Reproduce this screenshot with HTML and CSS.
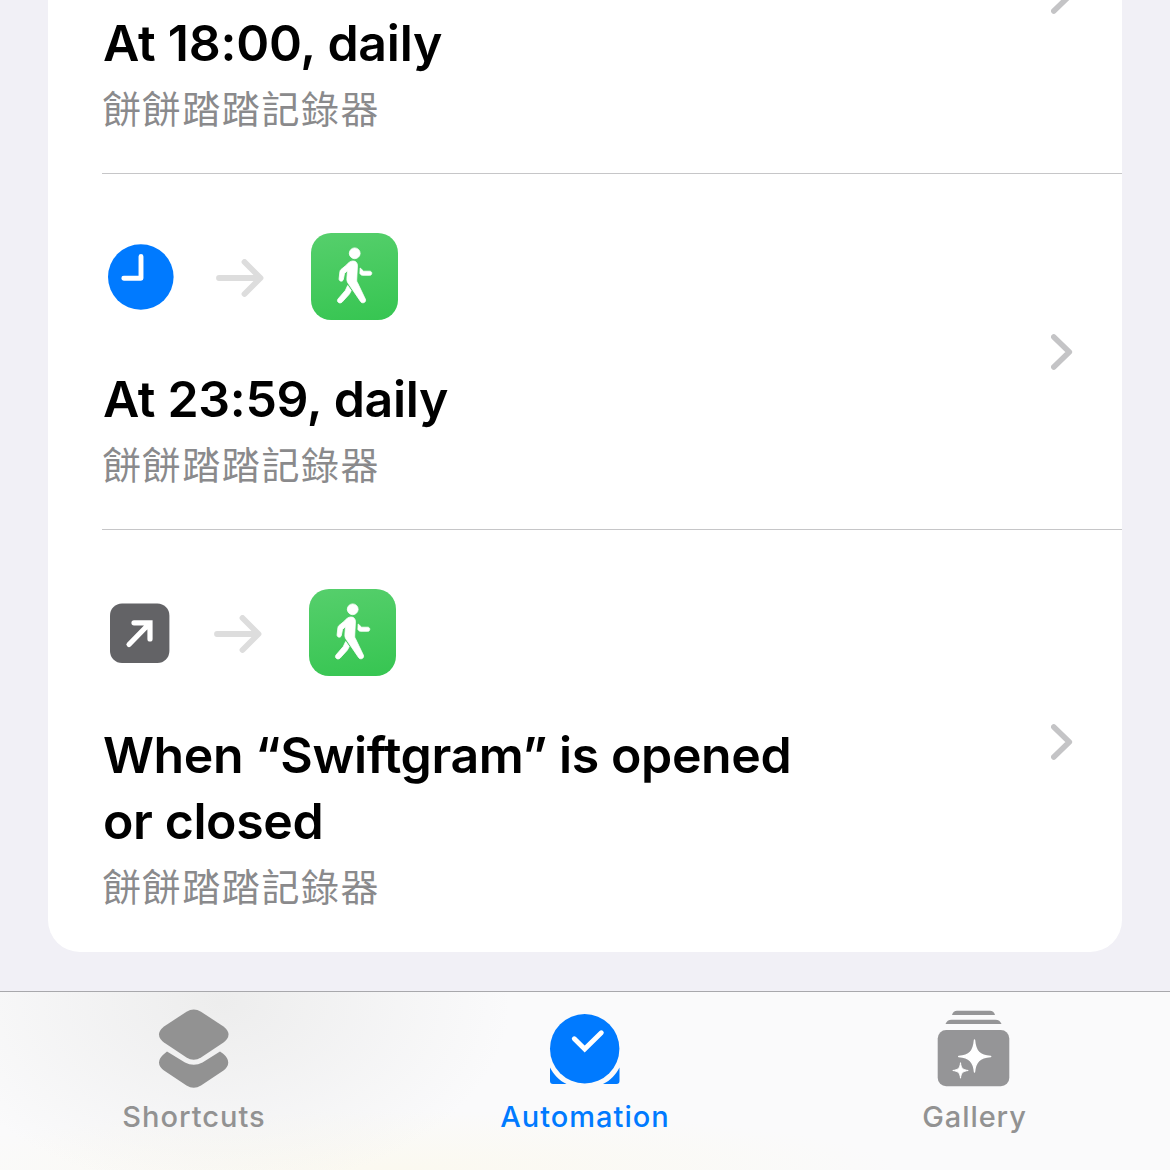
FILE: index.html
```html
<!DOCTYPE html>
<html lang="en">
<head>
<meta charset="utf-8">
<title>Automation</title>
<link rel="stylesheet" href="styles.css">
</head>
<body>
<svg class="defs" width="0" height="0" aria-hidden="true">
  <defs>
    <symbol id="chevron" viewBox="0 0 22 36"><path d="M2.800 3 18.300 18 2.800 33" fill="none" stroke="#c4c4c6" stroke-width="5.600" stroke-linecap="round" stroke-linejoin="round"/></symbol>
    <symbol id="arrow" viewBox="0 0 48 38"><path d="M3 19H44M28.5 3 44.5 19 28.5 35" fill="none" stroke="#dddddd" stroke-width="5.800" stroke-linecap="round" stroke-linejoin="round"/></symbol>
    <symbol id="walk" viewBox="0 0 87 87">
      <g fill="#fff" stroke="#fff" stroke-width=".8" stroke-linejoin="round">
      <circle cx="43.700" cy="20.300" r="5.400"/>
      <path d="M35.500 32C37.500 29.200 40 28 42 28C45 28 46.600 30 46.400 33L45.700 47C45.600 48 45.800 48.500 46.400 49.500L54.300 66C55.800 69.300 51.200 71.300 49.500 68.400L38 51.500C36.200 49 35.700 47.500 35.900 45.400L36.500 37.500L33.500 40.500L32.300 46.500C31.700 49.200 27.700 48.500 28.100 45.600L28.900 38.800C29 37.800 29.400 37.100 30 36.500Z"/>
      <path d="M36.700 52.500 40.200 57.600C39.700 59 39 60.200 38 61.500L31.200 69C28.800 71.500 25 68.700 27 66L34.300 57.500Z"/>
      <path d="M49.200 35 52.600 38.200H58.800C61.400 38.200 61.400 42.300 58.800 42.300H51.700C50.700 42.300 50.200 42 49.700 41.500L48.900 40.400Z"/>
      </g>
    </symbol>
  </defs>
</svg>
<main class="content">
  <section class="card">
    <article class="row">
      <div class="text">
        <h2 class="title early">At 18:00, daily</h2>
        <p class="subtitle">餅餅踏踏記錄器</p>
      </div>
      <svg class="chevron"><use href="#chevron"/></svg>
    </article>
    <article class="row">
      <div class="text">
        <div class="flow">
          <svg class="trigger clock" viewBox="0 0 66 66"><circle cx="32.800" cy="33" r="32.800" fill="#007aff"/><path d="M33 12.500V34.200H15.800" fill="none" stroke="#fff" stroke-width="4.900" stroke-linecap="round" stroke-linejoin="round"/></svg>
          <svg class="arrow"><use href="#arrow"/></svg>
          <span class="app"><svg class="walk"><use href="#walk"/></svg></span>
        </div>
        <h2 class="title">At 23:59, daily</h2>
        <p class="subtitle">餅餅踏踏記錄器</p>
      </div>
      <svg class="chevron"><use href="#chevron"/></svg>
    </article>
    <article class="row">
      <div class="text">
        <div class="flow">
          <svg class="trigger open" viewBox="0 0 60 60"><rect x="0" y=".5" width="59.400" height="59.400" rx="12" fill="#636366"/><path d="M19 41.500 39.500 20.500M24 19.800H40V36" fill="none" stroke="#fff" stroke-width="5.200" stroke-linecap="round" stroke-linejoin="miter"/></svg>
          <svg class="arrow"><use href="#arrow"/></svg>
          <span class="app"><svg class="walk"><use href="#walk"/></svg></span>
        </div>
        <h2 class="title long">When “Swiftgram” is opened<br>or closed</h2>
        <p class="subtitle">餅餅踏踏記錄器</p>
      </div>
      <svg class="chevron"><use href="#chevron"/></svg>
    </article>
  </section>
</main>
<nav class="tabs">
  <a class="tab">
    <svg class="tab-icon" viewBox="0 0 80 80"><g fill="#929292">
      <path d="M32.500 2.700Q39.700 -1.700 47 2.700L69.500 17.500Q79.500 25.600 69.500 33.600L47 48.500Q39.700 52.900 32.500 48.500L10 33.600Q0 25.600 10 17.500Z"/>
      <path d="M13 42.400 31 53.500Q39.700 58 48.500 53.500L66 42.400L69.500 45Q79 53.500 69.500 61.500L47 76.500Q39.700 80.900 32.500 76.500L10 61.500Q0 53.500 10 45Z"/>
    </g></svg>
    <span class="label">Shortcuts</span>
  </a>
  <a class="tab active">
    <svg class="tab-icon" viewBox="0 0 80 80"><g fill="#007aff">
      <circle cx="39.700" cy="39.700" r="34.700"/>
      <path d="M5 58.500C8.500 65.500 14 71.500 21.500 75H8Q5 75 5 72Z"/>
      <path d="M74.500 58.500C71 65.500 65.500 71.500 58 75H71.500Q74.500 75 74.500 72Z"/></g>
      <path d="M29.300 29.800 39.700 40 56.300 23.800" fill="none" stroke="#fff" stroke-width="4.900" stroke-linecap="round" stroke-linejoin="miter"/>
    </svg>
    <span class="label">Automation</span>
  </a>
  <a class="tab">
    <svg class="tab-icon" viewBox="0 0 80 80"><g fill="#959597">
      <path d="M16 5.900Q17.300 1.700 21 1.700H54Q57.700 1.700 59 5.900Z"/>
      <path d="M9.500 15Q11 10.700 15.500 10.700H59.500Q64 10.700 65.500 15Z"/>
      <rect x="1.700" y="21" width="71.600" height="56.300" rx="8.500"/></g>
      <path d="M38.500 31C39.500 42.500 43.500 46.500 54.700 47.500C43.500 48.500 39.500 52.500 38.500 63C37.500 52.500 33.500 48.500 22.700 47.500C33.500 46.500 37.500 42.500 38.500 31Z" fill="#fff" stroke="#fff" stroke-width="1.400" stroke-linejoin="round"/>
      <path d="M24.500 53.700C25 59.300 27 60.800 32.200 61.500C27 62.200 25 63.800 24.500 69.200C24 63.800 22 62.200 16.800 61.500C22 60.800 24 59.300 24.500 53.700Z" fill="#fff" stroke="#fff" stroke-width="1" stroke-linejoin="round"/>
    </svg>
    <span class="label gallery">Gallery</span>
  </a>
</nav>
</body>
</html>
```
FILE: styles.css
```css
* { box-sizing: border-box; }
body {
  margin: 0;
  width: 1170px;
  height: 1170px;
  overflow: hidden;
  display: flex;
  flex-direction: column;
  background: #f1f0f6;
  font-family: Inter, "Noto Sans CJK TC", sans-serif;
}
.defs { display: none; }
.content {
  height: 991px;
  flex: none;
  display: flex;
  flex-direction: column;
  justify-content: flex-end;
  padding: 0 48px 39px;
  overflow: hidden;
}
.card {
  flex: none;
  background: #fff;
  border-radius: 32px;
}
.row {
  min-height: 356px;
  margin-left: 54px;
  padding: 59px 49px 40px 1px;
  display: flex;
  align-items: flex-end;
  justify-content: space-between;
  border-bottom: 1px solid #c6c6c8;
}
.row:last-child {
  padding-bottom: 41px;
  border-bottom: 0;
}
.flow {
  display: flex;
  align-items: center;
  height: 87px;
  margin-bottom: 46px;
}
.trigger { flex: none; }
.clock { width: 66px; height: 66px; margin: 1px 42px 0 5px; }
.open { width: 60px; height: 60px; margin: 0 44px 0 7px; }
.arrow { width: 48px; height: 38px; flex: none; margin: 2px 47px 0 0; }
.app {
  width: 87px;
  height: 87px;
  border-radius: 20px;
  background: linear-gradient(170deg, #56cf6c, #36c551);
}
.walk { display: block; width: 87px; height: 87px; }
.title {
  margin: 0 0 9px;
  font-size: 50px;
  line-height: 66px;
  font-weight: 600;
  letter-spacing: -0.32px;
  color: #000;
  white-space: nowrap;
}
.early { letter-spacing: -0.22px; }
.long { letter-spacing: -0.4px; }
.subtitle {
  margin: -2px 0 2px;
  font-family: "Noto Sans CJK TC", sans-serif;
  font-weight: 400;
  font-size: 38px;
  letter-spacing: 1.6px;
  line-height: 48px;
  color: #8a8a8c;
}
.chevron {
  width: 22px;
  height: 36px;
  flex: none;
  align-self: center;
  position: relative;
  top: -9px;
}
.row:last-child .chevron { top: -8px; }
.tabs {
  height: 179px;
  flex: none;
  display: grid;
  grid-template-columns: 388px 394px 388px;
  border-top: 1px solid #a8a8ac;
  background:
    radial-gradient(ellipse 290px 190px at 220px 10px, #ededed, #eeeeee00),
    radial-gradient(ellipse 500px 60px at 400px 178px, #fbf9f0, #fbf8ec00),
    #fafafb;
}
.tab {
  display: flex;
  flex-direction: column;
  align-items: center;
  padding-top: 17px;
  color: #929292;
}
.active { color: #007aff; }
.tab-icon { width: 80px; height: 80px; }
.label {
  margin-top: 9px;
  font-size: 29px;
  line-height: 38px;
  font-weight: 500;
  letter-spacing: 1px;
}
.gallery {
  margin-right: 3px;
  letter-spacing: 0.9px;
}
```
